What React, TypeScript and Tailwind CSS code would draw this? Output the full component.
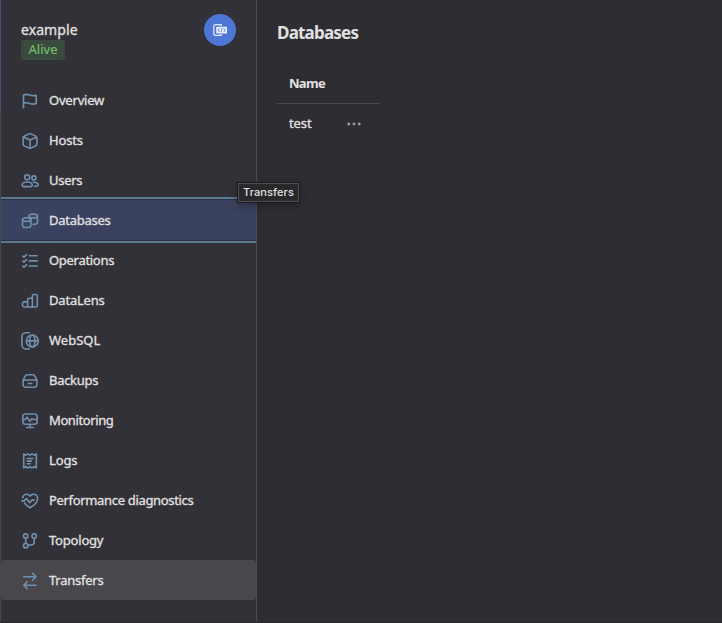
import type { ReactNode } from "react";

type Item = { label: string; tracking: string; icon: ReactNode; state?: "active" | "hover" };

const items: Item[] = [
  {
    label: "Overview",
    tracking: "tracking-[-0.2px]",
    icon: <path d="M1.500 15V2.100c2-1.400 4.100-.7 6.200 0 2.100.7 4.300.9 6.500.1v8.400c-2.200.9-4.400.5-6.500-.2-2.100-.7-4.200-1.100-6.200.1" />,
  },
  {
    label: "Hosts",
    tracking: "tracking-[-0.15px]",
    icon: <path d="M7.100.850a2 2 0 0 1 1.800 0l4.900 2.300a1.900 1.900 0 0 1 1.100 1.700v6.300a1.900 1.900 0 0 1-1.100 1.700l-4.900 2.300a2 2 0 0 1-1.800 0l-4.900-2.300a1.900 1.900 0 0 1-1.100-1.700V4.850a1.900 1.900 0 0 1 1.100-1.700zM1.700 4.200 8 7l6.300-2.800M8 7v8" />,
  },
  {
    label: "Users",
    tracking: "tracking-[-0.3px]",
    icon: (
      <>
        <circle cx="5.200" cy="4.300" r="2.500" />
        <circle cx="11.900" cy="4.900" r="2" />
        <path d="M.2 11.700c0-1.800 2.200-2.700 5-2.700s5 .9 5 2.700c0 1.400-.8 1.900-1.700 1.900h-6.600c-.9 0-1.700-.5-1.700-1.900zM11.300 9.300c2.500-.1 4.900.7 4.900 2.500 0 1-.7 1.500-1.600 1.500h-2.200" />
      </>
    ),
  },
  {
    label: "Databases",
    tracking: "tracking-[-0.25px]",
    state: "active",
    icon: (
      <>
        <ellipse cx="4.700" cy="6.600" rx="4.200" ry="1.850" />
        <path d="M.5 6.600v5.800c0 1.200 1.900 2.100 4.200 2.100s4.200-.9 4.200-2.100V6.600M7 4.600V3c0-1.100 1.900-1.850 4.250-1.850S15.500 1.900 15.500 3v6.500c0 1.200-2 1.900-4.400 1.900M7 3.100c0 1 1.900 1.800 4.250 1.800s4.250-.8 4.250-1.800" />
      </>
    ),
  },
  {
    label: "Operations",
    tracking: "tracking-[-0.3px]",
    icon: <path d="m.8 3 1.200 1.200L4.500 1.600M.8 8l1.200 1.200L4.500 6.600M.8 13l1.200 1.200 2.500-2.600M7.200 2.800h8M7.200 7.900h8M7.200 13h8" />,
  },
  {
    label: "DataLens",
    tracking: "tracking-[-0.2px]",
    icon: <path d="M5.600 14H1.900A1.300 1.300 0 0 1 .6 12.700v-2.500A1.300 1.300 0 0 1 1.900 8.900h3.700zM5.600 14V6.600a1.300 1.300 0 0 1 1.300-1.300h3.500V14zM10.400 14V2.900a1.400 1.400 0 0 1 1.400-1.400h2.100A1.400 1.400 0 0 1 15.300 2.900v9.700A1.400 1.400 0 0 1 13.900 14z" />,
  },
  {
    label: "WebSQL",
    tracking: "tracking-[0px]",
    icon: (
      <>
        <path d="M7.400-.3H3.800A4 4 0 0 0-.1 3.700v8.300a4 4 0 0 0 3.900 4h3.600" />
        <circle cx="10.300" cy="7.900" r="5.950" />
        <ellipse cx="10.300" cy="7.900" rx="2.500" ry="5.950" />
        <path d="M4.400 7.900h11.800" />
      </>
    ),
  },
  {
    label: "Backups",
    tracking: "tracking-[-0.3px]",
    icon: <path d="M1.100 7 3.100 3.100A2.300 2.300 0 0 1 5.200 1.700h5.600a2.300 2.300 0 0 1 2.100 1.400l2 3.900v4.800a2.400 2.400 0 0 1-2.400 2.400h-9a2.400 2.400 0 0 1-2.400-2.400zM1.300 7h13.400M6.200 10.500h3.600" />,
  },
  {
    label: "Monitoring",
    tracking: "tracking-[-0.4px]",
    icon: (
      <>
        <rect x=".8" y="1" width="14.400" height="10.300" rx="2.700" />
        <path d="M1.200 6.500h2.300l1.600-2.300 2.800 4.200 2-2.900 1.100 1h3.900M8 11.500v3M4.600 14.500h6.800" />
      </>
    ),
  },
  {
    label: "Logs",
    tracking: "tracking-[-0.15px]",
    icon: <path d="m1.700.9 2.100 1.300L5.900.8 8 2.200 10.100.8l2.100 1.400L14.300.9v14l-2.100-1.300-2.100 1.400L8 13.600 5.900 15l-2.100-1.400-2.100 1.300zM5.200 5.500h5.600M5.200 8.100h4.300M5.200 10.700h3" />,
  },
  {
    label: "Performance diagnostics",
    tracking: "tracking-[-0.33px]",
    icon: <path d="M.8 5C1 2.700 2.600 1.200 4.700 1.200c1.400 0 2.600.8 3.300 1.900.7-1.100 1.900-1.900 3.300-1.900 2.400 0 4.300 1.800 4.300 4.200 0 3.700-4.200 7.300-7.600 9.300-1.900-1.100-4-2.700-5.300-4.500M0 7.900h2.300L4.500 5.500l3.300 4.200 2-2.600h2.400" />,
  },
  {
    label: "Topology",
    tracking: "tracking-[-0.2px]",
    icon: (
      <>
        <circle cx="3.700" cy="3.100" r="2.200" />
        <circle cx="3.700" cy="12.700" r="2.200" />
        <circle cx="12.200" cy="3.100" r="2.200" />
        <path d="M3.700 5.400v5.100M12.200 5.400v3.300a3.300 3.300 0 0 1-3.300 3.300H6" />
      </>
    ),
  },
  {
    label: "Transfers",
    tracking: "tracking-[-0.25px]",
    state: "hover",
    icon: <path d="M1.700 3.800H14M10.600.4 14 3.800l-3.400 3.400M14 12.200H1.800M5.200 8.800l-3.400 3.400 3.400 3.400" />,
  },
];

function NavRow({ item }: { item: Item }) {
  const state =
    item.state === "active"
      ? "z-10 -my-[3px] h-[46px] border-y-2 border-[#597891] bg-[#3a425f] shadow-[inset_0_1px_0_#303544,inset_0_-1px_0_#303544]"
      : item.state === "hover"
        ? "h-10 rounded-[3px] bg-[#48474c]"
        : "h-10";
  return (
    <a className={`flex shrink-0 items-center gap-[11px] pl-[21px] ${state}`}>
      <svg className="mt-0.5 size-4 overflow-visible" viewBox="0 0 16 16" fill="none" stroke="#7090ae" strokeWidth="1.600" strokeLinecap="round" strokeLinejoin="round">
        {item.icon}
      </svg>
      <span className={`text-[13px] leading-5 whitespace-nowrap text-[#e2e1e2] [-webkit-text-stroke:0.3px] ${item.tracking}`}>{item.label}</span>
    </a>
  );
}

export default function App() {
  return (
    <div className="relative flex h-[623px] w-[722px] overflow-hidden border-b border-[#29272b] bg-[#2e2d33] font-['Noto_Sans','Open_Sans',sans-serif] text-[#e2e1e2]">
      <aside className="flex w-[257px] shrink-0 flex-col border-r border-l border-r-[#4a494e] border-l-[#47464b] bg-[#323137]">
        <header className="relative flex h-20 shrink-0 items-start justify-between pt-[14px] pr-5 pl-5">
          <div className="absolute top-0 -left-px h-[110px] w-px bg-[#45516f]" />
          <div className="pt-[6px]">
            <div className="text-[14px] leading-5 tracking-[0.08px] [-webkit-text-stroke:0.3px]">example</div>
            <div className="h-5 w-11 rounded-[3px] bg-[#3b4a3f] text-center text-[13px] leading-[19px] text-[#71c367] [-webkit-text-stroke:0.15px]">Alive</div>
          </div>
          <div className="flex size-8 items-center justify-center rounded-full bg-[#4e76d4]">
            <svg className="h-3 w-[14px]" viewBox="0 0 14 12" fill="none">
              <path d="M8.200 1.900V.7H2.600A1.800 1.800 0 0 0 .8 2.500v7a1.800 1.800 0 0 0 1.800 1.800h5.600v-1.200" stroke="#dfe8fc" strokeWidth="1.300" />
              <rect x="3.200" y="2.700" width="10.800" height="6.800" rx=".4" fill="#e7eefd" />
              <path d="M6.500 4.200 5.200 6.100l1.300 1.900M10.900 4.200l1.300 1.900-1.300 1.900M9.300 3.800l-1.200 4.600" stroke="#4e76d4" strokeWidth=".8" />
            </svg>
          </div>
        </header>
        <nav className="flex flex-col">
          {items.map((item) => (
            <NavRow key={item.label} item={item} />
          ))}
        </nav>
      </aside>
      <main className="flex flex-col items-start pt-[21px] pl-5">
        <h1 className="text-[17px] leading-6 font-bold tracking-[-0.8px]">Databases</h1>
        <div className="mt-[19px] flex w-[103px] flex-col">
          <div className="flex h-10 items-center border-b border-[#4b4a4f] pl-3 text-[13px] font-bold tracking-[-0.7px]">Name</div>
          <div className="flex h-10 items-center pl-3">
            <span className="w-[58px] text-[13px] tracking-[-0.1px] [-webkit-text-stroke:0.3px]">test</span>
            <svg className="h-4 w-4" viewBox="0 0 16 16" fill="#9b9a9f">
              <circle cx="1.800" cy="8" r="1.450" />
              <circle cx="7" cy="8" r="1.450" />
              <circle cx="12.200" cy="8" r="1.450" />
            </svg>
          </div>
        </div>
      </main>
      <div className="absolute top-[182px] left-[237px] z-20 flex h-[21px] w-[63px] items-center justify-center border border-[#19191b] bg-[#29282b] font-[Inter,sans-serif] text-[11px] font-medium tracking-[0.1px] shadow-[inset_0_0_0_1px_#504f52,0_3px_8px_rgba(0,0,0,0.3)]">
        Transfers
      </div>
    </div>
  );
}
